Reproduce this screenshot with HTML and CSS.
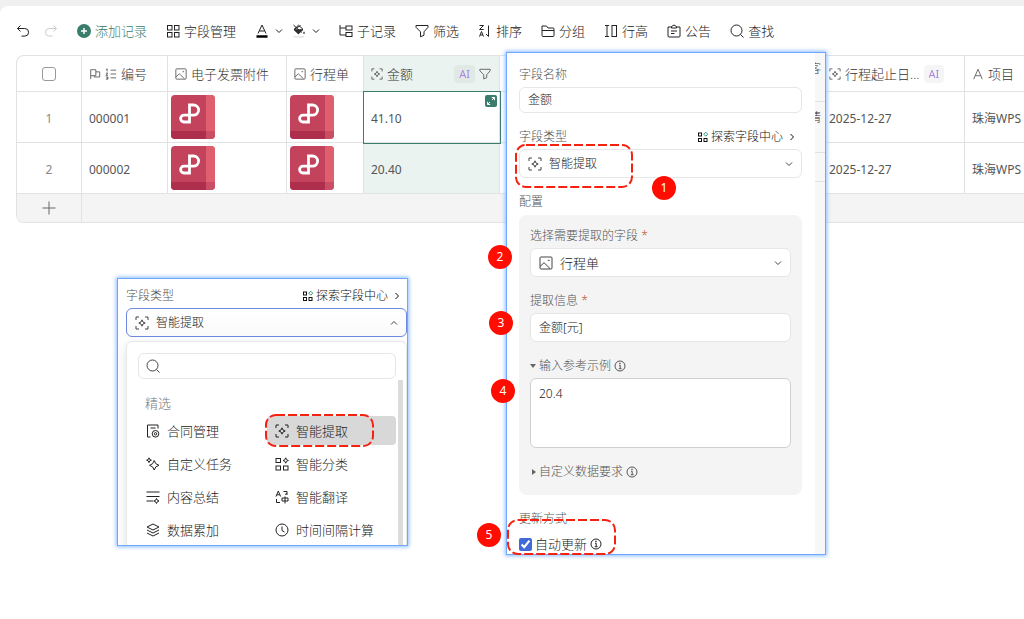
FILE: index.html
```html
<!DOCTYPE html>
<html lang="zh-CN">
<head>
    <meta charset="UTF-8">
    <meta name="viewport" content="width=device-width, initial-scale=1.0">
    <title>多维表格</title>
    <link rel="stylesheet" href="styles.css">
</head>
<body>
    <!-- icon set -->
    <svg class="sprite" aria-hidden="true">
        <symbol id="i-undo" viewBox="0 0 14 14"><path d="M4.5 1.5 1.5 4.5l3 3M1.5 4.5h7.3a3.8 3.8 0 0 1 0 7.6H5.5"/></symbol>
        <symbol id="i-redo" viewBox="0 0 14 14"><path d="M9.5 1.5l3 3-3 3M12.5 4.5H5.200a3.8 3.8 0 0 0 0 7.600h3.300"/></symbol>
        <symbol id="i-add" viewBox="0 0 14 14"><circle cx="7" cy="7" r="7" fill="#3b7d6d" stroke="none"/><path d="M7 4v6M4 7h6" stroke="#fff" stroke-width="1.5"/></symbol>
        <symbol id="i-grid" viewBox="0 0 14 14"><rect x="1.5" y="1.5" width="4.5" height="4.5"/><rect x="8.5" y="1.5" width="4.5" height="4.5"/><rect x="1.5" y="8.5" width="4.5" height="4.5"/><rect x="8.5" y="8.5" width="4.5" height="4.5"/></symbol>
        <symbol id="i-color" viewBox="0 0 14 14"><path d="M3 9.5 7 1l4 8.5M4.300 7h5.400"/><path d="M1.5 12.5h11" stroke="#000" stroke-width="2.5"/></symbol>
        <symbol id="i-fill" viewBox="0 0 14 14"><path d="M1.5 1l8 7.500M8.500 1.500 2 5.500"/><path d="M6.500 1.200 2 5.500l4.300 4.200 4.700-4.400z"/><path d="M2.500 5.800h8.200L6.400 9.700z" fill="#333"/><path d="M12 7.200c1.400 2 1 2.600 0 2.600s-1.200-.8 0-2.600z" fill="#333" stroke="none"/><path d="M1.5 12.800h10.500" stroke="#e4e4e4" stroke-width="1.5"/></symbol>
        <symbol id="i-down" viewBox="0 0 8 8"><path d="M1 2.5 4 5.5l3-3"/></symbol>
        <symbol id="i-up" viewBox="0 0 8 8"><path d="M1 5.5 4 2.5l3 3"/></symbol>
        <symbol id="i-right" viewBox="0 0 8 8"><path d="M2.5 1l3 3-3 3"/></symbol>
        <symbol id="i-sub" viewBox="0 0 14 14"><path d="M1 1v10h6M1 4h6"/><rect x="7" y="2" width="6" height="4"/><rect x="7" y="8.500" width="6" height="4"/></symbol>
        <symbol id="i-filter" viewBox="0 0 14 14"><path d="M1 1.5h12v1.800L9 7.800v3.400l-3.500 1.600v-5L1 3.300z"/></symbol>
        <symbol id="i-sort" viewBox="0 0 14 14"><path d="M1.5 1.5h4l-4 4h4.200M1.5 12.5l2-5 2 5M2.200 11h2.600M10.500 1.500v11M8 10l2.500 2.500"/></symbol>
        <symbol id="i-folder" viewBox="0 0 14 14"><path d="M1 11.5v-9.500h4.500l1.500 2h5a1 1 0 0 1 1 1v6.500a1 1 0 0 1-1 1H2a1 1 0 0 1-1-1zM1 6.500h12"/></symbol>
        <symbol id="i-height" viewBox="0 0 14 14"><path d="M1 1.5h4M3 1.5v11M1 12.500h4"/><rect x="8" y="1.5" width="4.500" height="11"/></symbol>
        <symbol id="i-notice" viewBox="0 0 14 14"><path d="M4.500 3H1v9a1 1 0 0 0 1 1h10a1 1 0 0 0 1-1V3H9.500"/><path d="M4.500 4V2.500L7 1l2.500 1.500V4zM4 7h6M4 9.500h3.500"/></symbol>
        <symbol id="i-search" viewBox="0 0 14 14"><circle cx="6.500" cy="6.500" r="5.500"/><path d="M10.500 10.500l3 3"/></symbol>
        <symbol id="i-flag" viewBox="0 0 14 14"><path d="M2 13V2h6v7H2M8 4.500h4.500v6H6V9"/></symbol>
        <symbol id="i-list" viewBox="0 0 14 14"><path d="M6.500 2.500H13M6.500 7H13M6.500 11.500H13M1 2l1.500-1v3M1 6h2.500L1 8.500h2.500M1 10.500h2.500V13H1M1.800 11.800h1.700"/></symbol>
        <symbol id="i-image" viewBox="0 0 14 14"><rect x="1" y="1" width="12" height="12" rx="1"/><path d="M1 10.500l4-3.800 6 5.800M8.800 4.300h1.800"/></symbol>
        <symbol id="i-extract" viewBox="0 0 14 14"><path d="M1 4V1h3M10 1h3v3M13 10v3h-3M4 13H1v-3M7 3.800 8 6l2.200 1L8 8 7 10.200 6 8 3.800 7 6 6z"/></symbol>
        <symbol id="i-text" viewBox="0 0 14 14"><path d="M2 13 7 1.500 12 13M3.800 9h6.400"/></symbol>
        <symbol id="i-plus" viewBox="0 0 14 14"><path d="M7 .5v13M.5 7h13"/></symbol>
        <symbol id="i-expand" viewBox="0 0 12 12"><rect width="12" height="12" rx="2" fill="#3b7d6d" stroke="none"/><path d="M6.800 2.500h2.700v2.700M9.300 2.700 7 5M5.200 9.500H2.500V6.800M2.700 9.300 5 7" stroke="#fff"/></symbol>
        <symbol id="i-center" viewBox="0 0 12 12"><rect x="1.500" y="2" width="3" height="3"/><rect x="1.500" y="7.500" width="3" height="3"/><rect x="7" y="7.500" width="3" height="3"/><path d="M8.700 1.200l2 2-2 2-2-2z" stroke="#2f9378"/></symbol>
        <symbol id="i-info" viewBox="0 0 12 12"><circle cx="6" cy="6" r="5"/><path d="M5 5.200h1.200v3.300M4.800 8.700h2.800"/><circle cx="6" cy="3.300" r=".4"/></symbol>
        <symbol id="i-contract" viewBox="0 0 14 14"><path d="M4.500 13H1.500V1h10.500v3.500M4.500 4h5"/><circle cx="9.500" cy="9.800" r="3.300"/><circle cx="9.500" cy="9.800" r="1.200"/></symbol>
        <symbol id="i-task" viewBox="0 0 14 14"><path d="M8.200 3.500 9.800 6.700 13 8.300 9.800 9.900 8.200 13 6.600 9.900 3.500 8.300 6.600 6.700zM3 .8 3.700 2.500 5.400 3.200 3.700 3.900 3 5.600 2.300 3.900.6 3.200 2.300 2.500z"/></symbol>
        <symbol id="i-summary" viewBox="0 0 14 14"><path d="M.5 2h13M.5 6.500h13M.5 11h7M10.500 8.500l.8 1.700 1.700.8-1.700.8-.8 1.700-.8-1.700-1.700-.8 1.700-.8z"/></symbol>
        <symbol id="i-layers" viewBox="0 0 14 14"><path d="M7 1l6 3-6 3-6-3zM1 7l6 3 6-3M1 10l6 3 6-3"/></symbol>
        <symbol id="i-classify" viewBox="0 0 14 14"><rect x="1" y="1.5" width="4.500" height="4"/><rect x="1" y="9" width="4.500" height="4"/><rect x="8.500" y="9" width="4.500" height="4"/><path d="M10.700.8l.8 1.900 1.900.8-1.900.8-.8 1.900-.8-1.900-1.900-.8 1.900-.8z"/></symbol>
        <symbol id="i-translate" viewBox="0 0 14 14"><path d="M1 6.500 3.300 1l2.300 5.500M2 4.800h2.700M8.500 1.500h3.500v3.500M10 4.500l2-1M1.500 9v3.500h3.500M7 8h6v3H7zM10 6.500v7"/></symbol>
        <symbol id="i-clock" viewBox="0 0 14 14"><circle cx="7" cy="7" r="6"/><path d="M7 3.500V7.500l2.500 1.500"/></symbol>
        <symbol id="i-pdf" viewBox="0 0 44 44">
            <g stroke="none"><rect width="44" height="44" rx="4" fill="#c3435c"/><path d="M35 0h5a4 4 0 0 1 4 4v32h-9z" fill="#e05f6f"/><path d="M0 36h35v8H4a4 4 0 0 1-4-4z" fill="#ae2f4c"/><path d="M35 36h9v4a4 4 0 0 1-4 4h-5z" fill="#ca4e64"/></g>
            <path d="M18.500 10H22.500a5 5 0 0 1 0 10.200H13a3.400 3.400 0 0 0 0 6.800h5.500z" stroke="#fff" stroke-width="2.800"/>
        </symbol>
    </svg>

    <main class="page">
        <div class="toolbar">
            <div class="history">
                <button class="tool" aria-label="撤销"><svg class="icon"><use href="#i-undo"/></svg></button>
                <button class="tool faded" aria-label="恢复"><svg class="icon"><use href="#i-redo"/></svg></button>
            </div>
            <button class="tool primary"><svg class="icon"><use href="#i-add"/></svg>添加记录</button>
            <button class="tool"><svg class="icon"><use href="#i-grid"/></svg>字段管理</button>
            <div class="colors">
                <button class="tool" aria-label="字体颜色"><svg class="icon"><use href="#i-color"/></svg><svg class="arrow"><use href="#i-down"/></svg></button>
                <button class="tool" aria-label="填充颜色"><svg class="icon"><use href="#i-fill"/></svg><svg class="arrow"><use href="#i-down"/></svg></button>
            </div>
            <button class="tool"><svg class="icon"><use href="#i-sub"/></svg>子记录</button>
            <button class="tool"><svg class="icon"><use href="#i-filter"/></svg>筛选</button>
            <button class="tool"><svg class="icon"><use href="#i-sort"/></svg>排序</button>
            <button class="tool"><svg class="icon"><use href="#i-folder"/></svg>分组</button>
            <button class="tool"><svg class="icon"><use href="#i-height"/></svg>行高</button>
            <button class="tool"><svg class="icon"><use href="#i-notice"/></svg>公告</button>
            <button class="tool"><svg class="icon"><use href="#i-search"/></svg>查找</button>
        </div>

        <div class="sheet">
            <table>
                <colgroup>
                    <col class="c-check"><col class="c-no"><col class="c-invoice"><col class="c-trip"><col class="c-amount"><col class="c-more"><col class="c-date"><col>
                </colgroup>
                <thead>
                    <tr>
                        <th class="center"><input type="checkbox" class="pick" aria-label="全选"></th>
                        <th><div class="head"><svg class="mini"><use href="#i-flag"/></svg><svg class="mini"><use href="#i-list"/></svg>编号</div></th>
                        <th><div class="head"><svg class="mini"><use href="#i-image"/></svg>电子发票附件</div></th>
                        <th><div class="head"><svg class="mini"><use href="#i-image"/></svg>行程单</div></th>
                        <th class="active"><div class="head"><svg class="mini"><use href="#i-extract"/></svg>金额<span class="ai push"><span>AI</span></span><svg class="mini"><use href="#i-filter"/></svg></div></th>
                        <th></th>
                        <th><div class="head"><svg class="mini"><use href="#i-extract"/></svg>行程起止日...<span class="ai"><span>AI</span></span></div></th>
                        <th><div class="head"><svg class="mini"><use href="#i-text"/></svg>项目</div></th>
                    </tr>
                </thead>
                <tbody>
                    <tr>
                        <td class="center num">1</td>
                        <td>000001</td>
                        <td class="file"><svg class="pdf"><use href="#i-pdf"/></svg></td>
                        <td class="file"><svg class="pdf"><use href="#i-pdf"/></svg></td>
                        <td class="selected">41.10<svg class="expand"><use href="#i-expand"/></svg></td>
                        <td></td>
                        <td>2025-12-27</td>
                        <td>珠海WPS</td>
                    </tr>
                    <tr>
                        <td class="center num">2</td>
                        <td>000002</td>
                        <td class="file"><svg class="pdf"><use href="#i-pdf"/></svg></td>
                        <td class="file"><svg class="pdf"><use href="#i-pdf"/></svg></td>
                        <td class="active">20.40</td>
                        <td></td>
                        <td>2025-12-27</td>
                        <td>珠海WPS</td>
                    </tr>
                </tbody>
                <tfoot>
                    <tr>
                        <td class="center"><button class="tool add-row" aria-label="新增一行"><svg class="icon"><use href="#i-plus"/></svg></button></td>
                        <td colspan="7"></td>
                    </tr>
                </tfoot>
            </table>
        </div>

        <!-- field type picker -->
        <section class="window picker">
            <div class="field">
                <div class="label-row">
                    <label for="pickType">字段类型</label>
                    <a href="#" class="center-link"><svg class="small"><use href="#i-center"/></svg>探索字段中心<svg class="arrow"><use href="#i-right"/></svg></a>
                </div>
                <div class="control tall open">
                    <svg class="icon"><use href="#i-extract"/></svg>
                    <select id="pickType"><option>智能提取</option></select>
                    <svg class="arrow"><use href="#i-up"/></svg>
                </div>
            </div>
            <div class="dropdown">
                <div class="control search">
                    <svg class="icon"><use href="#i-search"/></svg>
                    <input type="text" aria-label="搜索">
                </div>
                <div class="list">
                    <h3>精选</h3>
                    <div class="options">
                        <button class="option"><svg class="icon"><use href="#i-contract"/></svg>合同管理</button>
                        <button class="option current"><svg class="icon"><use href="#i-extract"/></svg>智能提取</button>
                        <button class="option"><svg class="icon"><use href="#i-task"/></svg>自定义任务</button>
                        <button class="option"><svg class="icon"><use href="#i-classify"/></svg>智能分类</button>
                        <button class="option"><svg class="icon"><use href="#i-summary"/></svg>内容总结</button>
                        <button class="option"><svg class="icon"><use href="#i-translate"/></svg>智能翻译</button>
                        <button class="option"><svg class="icon"><use href="#i-layers"/></svg>数据累加</button>
                        <button class="option"><svg class="icon"><use href="#i-clock"/></svg>时间间隔计算</button>
                    </div>
                </div>
            </div>
        </section>

        <!-- field settings -->
        <section class="window settings">
            <form class="form">
                <div class="field">
                    <label for="fieldName">字段名称</label>
                    <div class="control"><input type="text" id="fieldName" value="金额"></div>
                </div>
                <div class="field">
                    <div class="label-row">
                        <label for="fieldType">字段类型</label>
                        <a href="#" class="center-link"><svg class="small"><use href="#i-center"/></svg>探索字段中心<svg class="arrow"><use href="#i-right"/></svg></a>
                    </div>
                    <div class="control tall">
                        <svg class="icon"><use href="#i-extract"/></svg>
                        <select id="fieldType"><option>智能提取</option></select>
                        <svg class="arrow"><use href="#i-down"/></svg>
                    </div>
                </div>
                <div class="field">
                    <span class="label">配置</span>
                    <div class="config">
                        <div class="field">
                            <label for="source">选择需要提取的字段 <span class="star">*</span></label>
                            <div class="control tall">
                                <svg class="icon"><use href="#i-image"/></svg>
                                <select id="source" class="large"><option>行程单</option></select>
                                <svg class="arrow"><use href="#i-down"/></svg>
                            </div>
                        </div>
                        <div class="field">
                            <label for="info">提取信息 <span class="star">*</span></label>
                            <div class="control tall"><input type="text" id="info" value="金额[元]"></div>
                        </div>
                        <div class="field">
                            <label for="sample" class="fold"><span class="tri down"></span>输入参考示例<svg class="small"><use href="#i-info"/></svg></label>
                            <textarea id="sample">20.4</textarea>
                        </div>
                        <div class="label fold"><span class="tri"></span>自定义数据要求<svg class="small"><use href="#i-info"/></svg></div>
                    </div>
                </div>
                <div class="field update">
                    <span class="label">更新方式</span>
                    <label for="auto" class="check"><input type="checkbox" id="auto" checked>自动更新<svg class="small"><use href="#i-info"/></svg></label>
                </div>
            </form>
            <div class="strip">
                <div>客</div>
                <div>情</div>
                <div></div>
            </div>
        </section>

        <!-- step marks -->
        <svg class="mark mark-type"><rect x="1" y="1" width="116" height="42" rx="10"/></svg>
        <svg class="mark mark-auto"><rect x="1" y="1" width="107" height="34" rx="10"/></svg>
        <svg class="mark mark-option"><rect x="1" y="1" width="107" height="31" rx="10"/></svg>
        <span class="step step1">1</span>
        <span class="step step2">2</span>
        <span class="step step3">3</span>
        <span class="step step4">4</span>
        <span class="step step5">5</span>
    </main>
</body>
</html>
```

FILE: styles.css
```css
* {
    box-sizing: border-box;
}

body {
    margin: 0;
    padding-top: 6px;
    background-color: #f0f0f0;
    font-family: "Noto Sans", "Noto Sans CJK SC", sans-serif;
    font-size: 12px;
    font-weight: 300;
    line-height: 20px;
    color: #222;
}

button, input, select, textarea {
    font: inherit;
    color: inherit;
}

svg {
    display: block;
    flex: none;
    fill: none;
    stroke: currentColor;
    stroke-width: 1;
}

.sprite {
    position: absolute;
    width: 0;
    height: 0;
}

.icon {
    width: 14px;
    height: 14px;
}

.mini, .small {
    width: 12px;
    height: 12px;
}

.arrow {
    width: 8px;
    height: 8px;
}

.page {
    position: relative;
    min-height: calc(100vh - 6px);
    background-color: #fff;
    border-radius: 8px 0 0 0;
    overflow: hidden;
}

/* toolbar */
.toolbar {
    display: flex;
    align-items: center;
    gap: 19px;
    height: 50px;
    padding-left: 16px;
}

.history {
    display: flex;
    gap: 14px;
}

.colors {
    display: flex;
    gap: 9px;
}

.tool {
    display: flex;
    align-items: center;
    gap: 4px;
    padding: 0;
    border: none;
    background: none;
    font-size: 13px;
    white-space: nowrap;
    cursor: pointer;
}

.colors .tool {
    gap: 6px;
}

.faded {
    color: #ccc;
}

.primary {
    color: #3b7d6d;
}

/* table */
.sheet {
    margin: -1px 0 0 16px;
    border: 1px solid #e2e2e2;
    border-right: none;
    border-radius: 8px 0 0 8px;
    overflow: hidden;
}

table {
    width: 100%;
    table-layout: fixed;
    border-collapse: separate;
    border-spacing: 0;
}

.c-check { width: 65px; }
.c-no { width: 86px; }
.c-invoice { width: 119px; }
.c-trip { width: 77px; }
.c-amount { width: 136px; }
.c-more { width: 322px; }
.c-date { width: 143px; }

th, td {
    padding: 0 8px 0 7px;
    border-right: 1px solid #e2e2e2;
    border-bottom: 1px solid #e2e2e2;
    text-align: left;
    font-weight: inherit;
    white-space: nowrap;
    color: #333;
}

th:last-child, td:last-child {
    border-right: none;
}

th {
    height: 36px;
    font-size: 13px;
}

td {
    height: 51px;
    padding-top: 3px;
    font-weight: 400;
    color: #555;
}

tfoot td {
    height: 28px;
    padding-top: 0;
    border-bottom: none;
    background-color: #f4f4f4;
}

.center {
    padding-left: 0;
    padding-right: 0;
    text-align: center;
}

.num {
    color: #888;
}

.pick {
    display: block;
    width: 14px;
    height: 14px;
    margin: 0 auto;
    appearance: none;
    border: 1px solid #999;
    border-radius: 3px;
}

.head {
    display: flex;
    align-items: center;
    gap: 4px;
}

.head svg {
    color: #555;
}

.ai {
    padding: 0 5px;
    border-radius: 4px;
    background-color: rgba(0, 0, 0, 0.04);
    font-size: 11px;
    font-weight: 400;
    line-height: 18px;
}

.ai span {
    background: linear-gradient(90deg, #c07fd8, #7f86ea);
    background-clip: text;
    -webkit-background-clip: text;
    color: transparent;
}

.push {
    margin-left: auto;
}

.active {
    background-color: #eaf3f0;
}

.file {
    padding: 0 3px;
}

.pdf {
    width: 44px;
    height: 44px;
}

.selected {
    position: relative;
    outline: 1px solid #3b7d6d;
}

.expand {
    position: absolute;
    top: 3px;
    right: 2px;
    width: 12px;
    height: 12px;
}

.add-row {
    margin: 0 auto;
    color: #666;
}

/* floating windows */
.window {
    position: absolute;
    border: 1px solid #6ea8ff;
    background-color: #fff;
    box-shadow: 0 0 4px 1px #8fbcff;
    overflow: hidden;
}

.field {
    display: flex;
    flex-direction: column;
    gap: 2px;
}

.label, label {
    color: #555;
}

.label-row {
    display: flex;
    justify-content: space-between;
}

.center-link {
    display: flex;
    align-items: center;
    gap: 2px;
    padding-right: 6px;
    color: #111;
    text-decoration: none;
}

.center-link .arrow {
    margin-left: 3px;
}

.control {
    display: flex;
    align-items: center;
    gap: 7px;
    height: 26px;
    padding: 0 8px;
    border: 1px solid #e6e6e6;
    border-radius: 6px;
    background-color: #fff;
}

.tall {
    height: 29px;
}

.control input, .control select {
    flex: 1;
    min-width: 0;
    padding: 0;
    border: none;
    outline: none;
    background: none;
    appearance: none;
}

.control .large {
    font-size: 13px;
}

.control svg {
    color: #444;
}

textarea {
    display: block;
    width: 100%;
    height: 70px;
    padding: 5px 8px;
    border: 1px solid #d0d0d0;
    border-radius: 6px;
    resize: none;
}

/* settings */
.settings {
    display: flex;
    top: 46px;
    left: 506px;
    width: 320px;
    height: 503px;
}

.form {
    flex: 1;
    display: flex;
    flex-direction: column;
    gap: 14px;
    padding: 12px 13px 0 12px;
}

.config {
    display: flex;
    flex-direction: column;
    gap: 14px;
    margin-top: 1px;
    padding: 11px 11px 13px;
    border-radius: 8px;
    background-color: #f4f4f4;
}

.star {
    color: #c0562a;
}

.fold {
    display: flex;
    align-items: center;
    gap: 3px;
}

.tri {
    margin: 0 0 0 2px;
    border: 3px solid transparent;
    border-left: 4px solid #666;
    border-right: none;
}

.tri.down {
    margin: 0;
    border: 3px solid transparent;
    border-top: 4px solid #666;
    border-bottom: none;
}

.update {
    gap: 5px;
}

.check {
    display: flex;
    align-items: center;
    gap: 3px;
    font-size: 13px;
    color: #222;
}

.check input {
    width: 13px;
    height: 13px;
    margin: 0;
    accent-color: #4169d8;
}

.strip {
    width: 10px;
    background-color: #f7f7f7;
    color: #333;
}

.strip div {
    display: flex;
    justify-content: flex-end;
    height: 51px;
    padding: 6px 4px 0 0;
    border-bottom: 1px solid #e2e2e2;
    overflow: hidden;
}

.strip div:first-child {
    height: 49px;
}

.strip div:last-child {
    height: 29px;
}

/* picker */
.picker {
    top: 272px;
    left: 117px;
    width: 291px;
    height: 268px;
    padding: 7px 0 0 8px;
}

.open {
    border-color: #6c88e0;
    background-image: linear-gradient(#fff, #fafafa);
}

.dropdown {
    margin-top: 4px;
    padding: 11px 3px 0 11px;
    border: 1px solid #e8e8e8;
    border-radius: 6px;
    background-color: #fff;
    box-shadow: 0 4px 12px rgba(0, 0, 0, 0.12);
}

.search {
    margin-right: 7px;
    padding: 0 7px;
}

.list {
    margin-top: 1px;
    padding: 13px 2px 10px 0;
    border-right: 5px solid #dcdcdc;
}

h3 {
    margin: 0 0 3px;
    padding-left: 7px;
    font-size: 13px;
    font-weight: 300;
    color: #777;
}

.options {
    display: grid;
    grid-template-columns: 1fr 1fr;
    row-gap: 4px;
}

.option {
    display: flex;
    align-items: center;
    gap: 7px;
    height: 29px;
    padding: 0 8px;
    border: none;
    border-radius: 4px;
    background: none;
    font-size: 13px;
    white-space: nowrap;
}

.current {
    background-color: #d8d8d8;
}

/* step marks */
.mark {
    position: absolute;
    stroke: #f5220f;
    stroke-width: 2;
    stroke-dasharray: 9 3;
}

.mark-type {
    top: 138px;
    left: 515px;
    width: 118px;
    height: 44px;
}

.mark-auto {
    top: 513px;
    left: 507px;
    width: 109px;
    height: 36px;
}

.mark-option {
    top: 408px;
    left: 265px;
    width: 109px;
    height: 33px;
}

.step {
    position: absolute;
    width: 24px;
    height: 24px;
    border-radius: 50%;
    background-color: #ff0d00;
    font-weight: 400;
    line-height: 24px;
    text-align: center;
    color: #fff;
}

.step1 { top: 170px; left: 652px; }
.step2 { top: 239px; left: 488px; }
.step3 { top: 305px; left: 489px; }
.step4 { top: 373px; left: 491px; }
.step5 { top: 517px; left: 477px; }
```
